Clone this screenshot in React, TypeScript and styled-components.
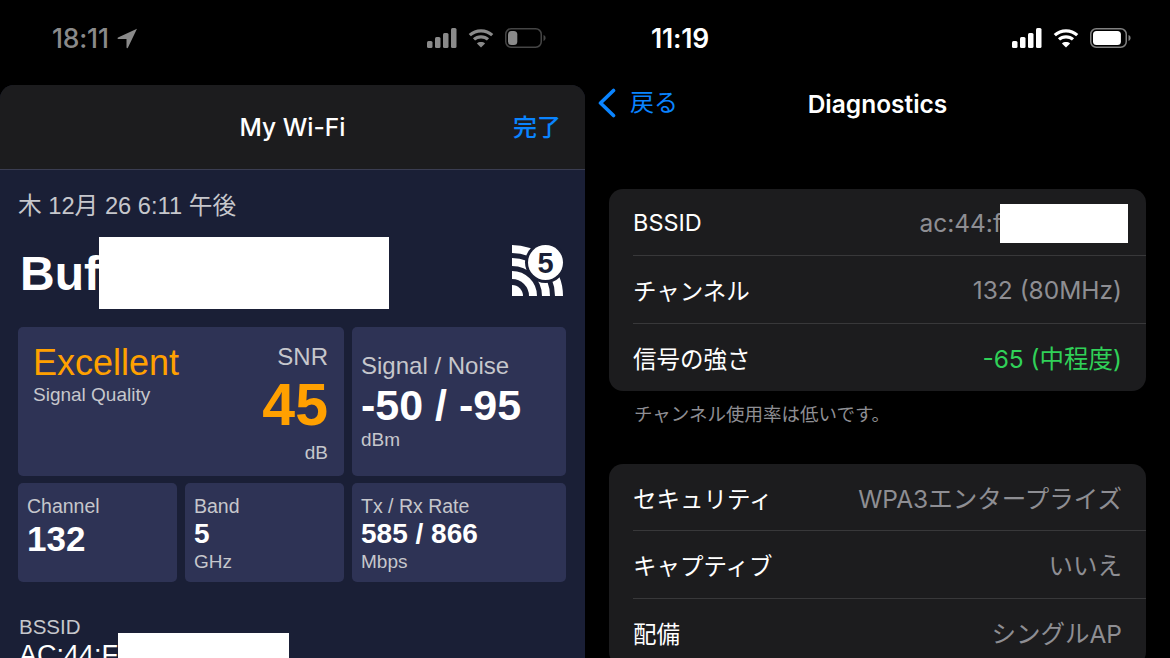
import React from 'react';
import styled, {createGlobalStyle} from 'styled-components';

const GlobalStyle = createGlobalStyle`
  html, body {
    margin: 0;
    padding: 0;
    background: #000;
  }
  * {
    box-sizing: border-box;
  }
`;

const IOS_FONT = `Inter, "Noto Sans CJK JP", sans-serif`;
const ARIAL_FONT = `"Liberation Sans", "Noto Sans CJK JP", sans-serif`;

function SignalIcon({color}: {color: string}) {
  return (
    <svg width="30" height="20" viewBox="0 0 30 20" fill={color}>
      <rect x="0" y="13" width="5.5" height="7" rx="1.5" />
      <rect x="8" y="9" width="5.5" height="11" rx="1.5" />
      <rect x="16" y="5" width="5.5" height="15" rx="1.5" />
      <rect x="24" y="0" width="5.5" height="20" rx="1.5" />
    </svg>
  );
}

function WifiIcon({color}: {color: string}) {
  return (
    <svg width="26" height="20" viewBox="0 0 26 20" fill="none" stroke={color} strokeWidth="3.2">
      <path d="M1.8 7.2C8 1.4 18 1.4 24.2 7.2" />
      <path d="M6 11.4C9.8 7.9 16.2 7.9 20 11.4" />
      <path d="M13 19.6L8.9 15.4C11 13.5 15 13.5 17.1 15.4Z" fill={color} stroke="none" />
    </svg>
  );
}

function BatteryIcon({color, level}: {color: string; level: number}) {
  return (
    <svg width="41" height="20" viewBox="0 0 41 20" fill="none">
      <rect x="0.75" y="0.75" width="35.5" height="18.5" rx="5.5" stroke={color} strokeOpacity="0.5" strokeWidth="1.5" />
      <rect x="3" y="3" width={31 * level} height="14" rx="3.5" fill={color} />
      <path d="M38.5 7V13C39.8 12.6 40.6 11.4 40.6 10C40.6 8.6 39.8 7.4 38.5 7Z" fill={color} fillOpacity="0.5" />
    </svg>
  );
}

function LocationIcon() {
  return (
    <svg width="21" height="21" viewBox="0 0 21 21" fill="#8a8a8a">
      <path d="M20 .8L1 9.6C.2 10 .4 11 1.300 11H9.500V19.300C9.500 20.300 10.600 20.500 11 19.600Z" />
    </svg>
  );
}

function WifiFiveLogo() {
  return (
    <LogoSvg width="52" height="52" viewBox="0 0 52 52" fill="none">
      <path d="M0 52V41A11 11 0 0 1 11 52Z" fill="#fff" />
      <g stroke="#fff" strokeWidth="8">
        <path d="M0 31A21 21 0 0 1 21 52" />
        <path d="M0 18A34 34 0 0 1 34 52" />
        <path d="M0 5A47 47 0 0 1 47 52" />
      </g>
      <circle cx="33.500" cy="18.500" r="20.500" fill="#1a1f36" />
      <circle cx="33.500" cy="18.500" r="17.500" fill="#fff" />
      <LogoDigit x="33.500" y="28.500">5</LogoDigit>
    </LogoSvg>
  );
}

function StatusIcons({color, level}: {color: string; level: number}) {
  return (
    <StatusRight>
      <SignalIcon color={color} />
      <WifiIcon color={color} />
      <BatteryIcon color={color} level={level} />
    </StatusRight>
  );
}

const FIRST_GROUP = [
  {label: 'BSSID', value: 'ac:44:f', inset: 120},
  {label: 'チャンネル', value: '132 (80MHz)'},
  {label: '信号の強さ', value: '-65 (中程度)', good: true},
];

const SECOND_GROUP = [
  {label: 'セキュリティ', value: 'WPA3エンタープライズ'},
  {label: 'キャプティブ', value: 'いいえ'},
  {label: '配備', value: 'シングルAP'},
];

export default function App() {
  return (
    <>
      <GlobalStyle />
      <Page>
        <Panel>
          <StatusBar>
            <StatusLeft>
              <StatusTime $color="#8a8a8a" $weight={500}>18:11</StatusTime>
              <LocationIcon />
            </StatusLeft>
            <StatusIcons color="#8a8a8a" level={0.3} />
          </StatusBar>
          <Sheet>
            <SheetHeader>
              <SheetTitle>My Wi-Fi</SheetTitle>
              <DoneButton>完了</DoneButton>
            </SheetHeader>
            <SheetBody>
              <DateLine>木 12月 26 6:11 午後</DateLine>
              <NetworkRow>
                <NetworkName>Buf</NetworkName>
                <NameMask />
                <WifiFiveLogo />
              </NetworkRow>
              <CardGrid>
                <QualityCard>
                  <div>
                    <QualityTitle>Excellent</QualityTitle>
                    <QualityLabel>Signal Quality</QualityLabel>
                  </div>
                  <SnrColumn>
                    <SnrLabel>SNR</SnrLabel>
                    <SnrValue>45</SnrValue>
                    <SnrUnit>dB</SnrUnit>
                  </SnrColumn>
                </QualityCard>
                <SignalCard>
                  <SignalLabel>Signal / Noise</SignalLabel>
                  <SignalValue>-50 / -95</SignalValue>
                  <CardUnit>dBm</CardUnit>
                </SignalCard>
                <SmallCard>
                  <CardLabel>Channel</CardLabel>
                  <ChannelValue>132</ChannelValue>
                </SmallCard>
                <SmallCard>
                  <CardLabel>Band</CardLabel>
                  <RateValue>5</RateValue>
                  <CardUnit>GHz</CardUnit>
                </SmallCard>
                <SmallCard>
                  <CardLabel>Tx / Rx Rate</CardLabel>
                  <RateValue>585 / 866</RateValue>
                  <CardUnit>Mbps</CardUnit>
                </SmallCard>
              </CardGrid>
              <BssidBlock>
                <BssidLabel>BSSID</BssidLabel>
                <BssidValue>AC:44:F</BssidValue>
                <BssidMask />
              </BssidBlock>
            </SheetBody>
          </Sheet>
        </Panel>

        <Panel>
          <StatusBar>
            <StatusLeft $offset={66}>
              <StatusTime $color="#fff" $weight={600}>11:19</StatusTime>
            </StatusLeft>
            <StatusIcons color="#fff" level={0.9} />
          </StatusBar>
          <NavBar>
            <BackLink>
              <svg width="20" height="30" viewBox="0 0 20 30" fill="none" stroke="#0a84ff" strokeWidth="3.600" strokeLinecap="round" strokeLinejoin="round">
                <path d="M16.500 2.500L3.500 15L16.500 27.500" />
              </svg>
              <BackText>戻る</BackText>
            </BackLink>
            <NavTitle>Diagnostics</NavTitle>
          </NavBar>
          <GroupList>
            <Group>
              <BssidRowMask />
              {FIRST_GROUP.map(row => (
                <Row key={row.label}>
                  <RowLabel>{row.label}</RowLabel>
                  <RowValue $good={row.good} $inset={row.inset}>{row.value}</RowValue>
                </Row>
              ))}
            </Group>
            <GroupNote>チャンネル使用率は低いです。</GroupNote>
            <Group>
              {SECOND_GROUP.map(row => (
                <Row key={row.label}>
                  <RowLabel>{row.label}</RowLabel>
                  <RowValue>{row.value}</RowValue>
                </Row>
              ))}
            </Group>
          </GroupList>
        </Panel>
      </Page>
    </>
  );
}

const Page = styled.div`
  display: grid;
  grid-template-columns: 585px 585px;
  width: 1170px;
  height: 658px;
  overflow: hidden;
  background: #000;
`;
const Panel = styled.div`
  height: 658px;
  overflow: hidden;
  background: #000;
  font-family: ${IOS_FONT};
`;
const StatusBar = styled.div`
  display: flex;
  align-items: center;
  justify-content: space-between;
  height: 76px;
  padding-right: 39px;
`;
const StatusLeft = styled.div<{$offset?: number}>`
  display: flex;
  align-items: center;
  gap: 8px;
  padding-left: ${props => props.$offset ?? 52}px;
`;
const StatusTime = styled.span<{$color: string; $weight: number}>`
  color: ${props => props.$color};
  font-size: 26.500px;
  font-weight: ${props => props.$weight};
  letter-spacing: -0.2px;
`;
const StatusRight = styled.div`
  display: flex;
  align-items: center;
  gap: 11px;
`;
const Sheet = styled.div`
  margin-top: 9px;
  height: 573px;
  border-radius: 14px 14px 0 0;
  overflow: hidden;
  background: #1a1f36;
`;
const SheetHeader = styled.div`
  position: relative;
  display: flex;
  align-items: center;
  justify-content: center;
  height: 85px;
  background: #1c1c1e;
  border-bottom: 1px solid #3a3d52;
`;
const SheetTitle = styled.span`
  color: #fff;
  font-size: 24.500px;
  font-weight: 500;
`;
const DoneButton = styled.span`
  position: absolute;
  right: 24px;
  top: 23px;
  color: #0a84ff;
  font-size: 24px;
  font-weight: 500;
`;
const SheetBody = styled.div`
  padding: 20px 19px 0 18px;
  font-family: ${ARIAL_FONT};
`;
const DateLine = styled.div`
  color: #c6c7cc;
  font-size: 23.700px;
  line-height: 32px;
`;
const NetworkRow = styled.div`
  position: relative;
  display: flex;
  align-items: center;
  justify-content: space-between;
  height: 72px;
  margin-top: 15px;
  padding: 0 2px 0 2px;
`;
const NetworkName = styled.span`
  color: #fff;
  font-size: 48px;
  font-weight: 700;
`;
const NameMask = styled.div`
  position: absolute;
  left: 81px;
  top: 0;
  width: 290px;
  height: 72px;
  background: #fff;
`;
const LogoSvg = styled.svg`
  margin-top: -6px;
`;
const LogoDigit = styled.text`
  fill: #1a1f36;
  font-family: ${ARIAL_FONT};
  font-size: 29px;
  font-weight: 700;
  text-anchor: middle;
`;
const CardGrid = styled.div`
  display: grid;
  grid-template-columns: 159px 159px 214px;
  grid-template-rows: 149px 99px;
  gap: 7px 8px;
  margin-top: 18px;
`;
const Card = styled.div`
  border-radius: 5px;
  background: #2e3355;
`;
const QualityCard = styled(Card)`
  grid-column: span 2;
  display: flex;
  justify-content: space-between;
  padding: 15px 16px 12px 15px;
`;
const QualityTitle = styled.div`
  color: #ffa000;
  font-size: 36px;
  line-height: 42px;
`;
const QualityLabel = styled.div`
  color: #c6c7cc;
  font-size: 19px;
  line-height: 22px;
`;
const SnrColumn = styled.div`
  display: flex;
  flex-direction: column;
  align-items: flex-end;
`;
const SnrLabel = styled.div`
  color: #c6c7cc;
  font-size: 24px;
  line-height: 30px;
`;
const SnrValue = styled.div`
  flex: 1;
  color: #ffa000;
  font-size: 59px;
  font-weight: 700;
  line-height: 66px;
`;
const SnrUnit = styled.div`
  color: #c6c7cc;
  font-size: 19px;
  line-height: 22px;
`;
const SignalCard = styled(Card)`
  padding: 23px 9px 0;
`;
const SignalLabel = styled.div`
  color: #c6c7cc;
  font-size: 24px;
  line-height: 32px;
`;
const SignalValue = styled.div`
  color: #fff;
  font-size: 43px;
  font-weight: 700;
  line-height: 46px;
`;
const SmallCard = styled(Card)`
  padding: 11px 9px 0;
`;
const CardLabel = styled.div`
  color: #c6c7cc;
  font-size: 19.500px;
  line-height: 24px;
`;
const CardUnit = styled.div`
  color: #c6c7cc;
  font-size: 19px;
  line-height: 24px;
`;
const ChannelValue = styled.div`
  color: #fff;
  font-size: 35px;
  font-weight: 700;
  line-height: 42px;
`;
const RateValue = styled.div`
  color: #fff;
  font-size: 28px;
  font-weight: 700;
  line-height: 32px;
`;
const BssidBlock = styled.div`
  position: relative;
  margin-top: 32px;
  padding-left: 1px;
`;
const BssidLabel = styled.div`
  color: #c6c7cc;
  font-size: 20.500px;
  line-height: 26px;
`;
const BssidValue = styled.div`
  color: #fff;
  font-size: 27px;
  line-height: 30px;
`;
const BssidMask = styled.div`
  position: absolute;
  left: 100px;
  top: 19px;
  width: 171px;
  height: 40px;
  background: #fff;
`;
const NavBar = styled.div`
  position: relative;
  display: flex;
  align-items: center;
  justify-content: center;
  height: 56px;
`;
const NavTitle = styled.span`
  color: #fff;
  font-size: 24.500px;
  font-weight: 600;
`;
const BackLink = styled.div`
  position: absolute;
  left: 12px;
  top: 11px;
  display: flex;
  align-items: center;
  gap: 13px;
  color: #0a84ff;
  font-size: 24px;
`;
const BackText = styled.span`
  margin-top: -4px;
`;
const GroupList = styled.div`
  margin: 57px 24px 0;
`;
const Group = styled.div`
  position: relative;
  border-radius: 14px;
  background: #1c1c1e;
  padding-left: 24px;
`;
const Row = styled.div`
  display: flex;
  align-items: center;
  justify-content: space-between;
  height: 67.330px;
  padding: 1px 24px 0 0;
  border-bottom: 1px solid #38383a;
  &:last-child {
    border-bottom: none;
  }
`;
const RowLabel = styled.span`
  color: #fff;
  font-size: 23.500px;
`;
const RowValue = styled.span<{$good?: boolean; $inset?: number}>`
  color: ${props => (props.$good ? '#30d158' : '#8e8e93')};
  font-size: 24.500px;
  margin-right: ${props => props.$inset ?? 0}px;
`;
const BssidRowMask = styled.div`
  position: absolute;
  left: 391px;
  top: 15px;
  width: 128px;
  height: 39px;
  background: #fff;
`;
const GroupNote = styled.div`
  height: 73px;
  padding: 11px 25px 0;
  color: #8e8e93;
  font-size: 18.500px;
  line-height: 24px;
`;
